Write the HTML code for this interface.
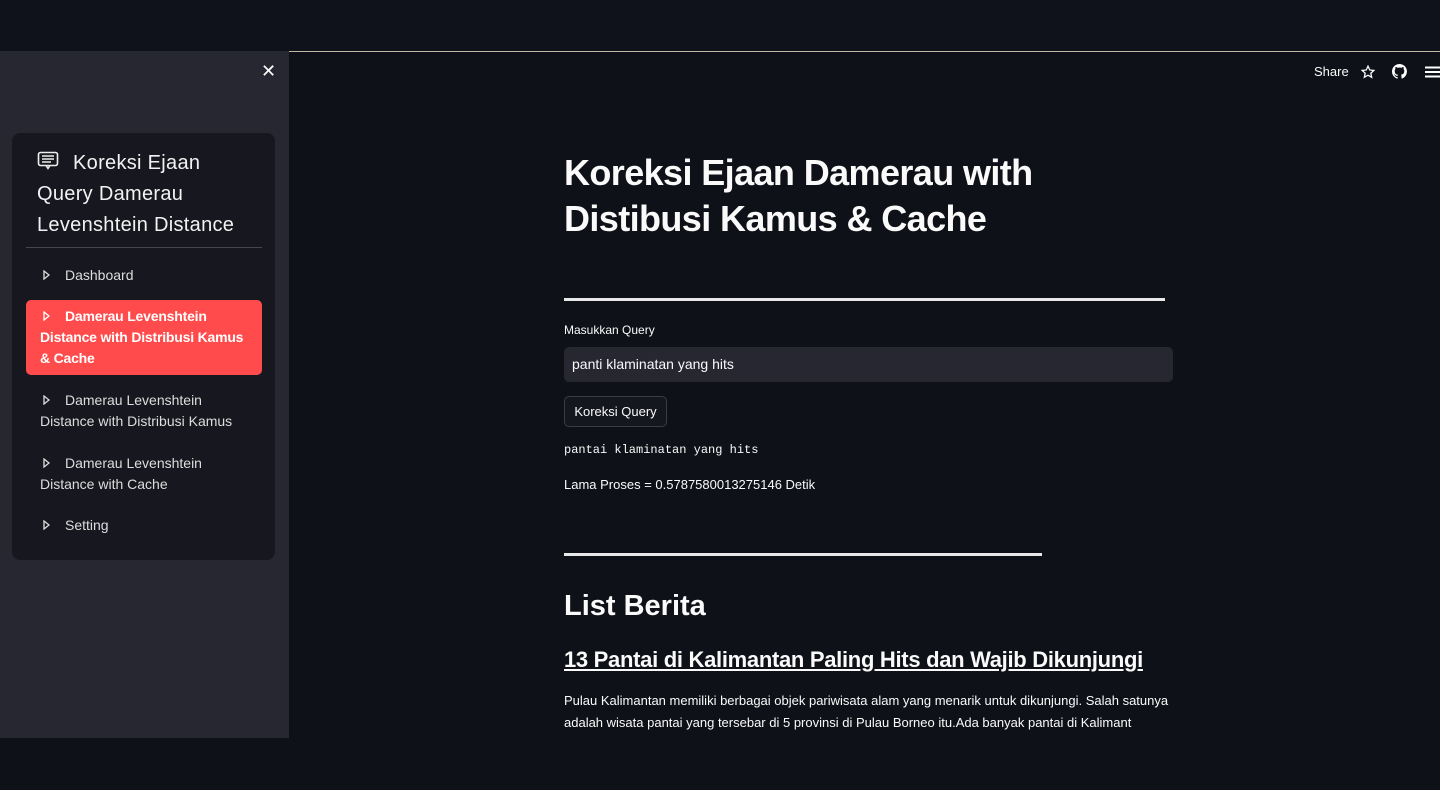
<!DOCTYPE html>
<html><head><style>
*{margin:0;padding:0;box-sizing:border-box}
body{width:1440px;height:790px;background:#0e1117;font-family:"Liberation Sans",sans-serif;color:#fafafa;position:relative;overflow:hidden}
.top{position:absolute;left:0;top:0;width:1440px;height:51px;background:#0f121a}
.line{position:absolute;left:289px;top:51px;width:1151px;height:1px;background:#bdb9a0}
.side{position:absolute;left:0;top:51px;width:289px;height:687px;background:#262730}
.close{position:absolute;left:261px;top:10px;font-size:18px;color:#fff}
.card{position:absolute;left:12px;top:82px;width:263px;height:427px;background:#17181f;border-radius:8px}
.ttl{position:absolute;left:25px;top:15px;font-size:20px;line-height:31px;color:#f2f2f2;width:205px;letter-spacing:0.3px}
.hr{position:absolute;left:14px;top:114px;width:236px;height:1px;background:#44464f}
.item{position:absolute;left:14px;width:236px;font-size:14px;line-height:21px;color:#ddd;padding-left:14px;padding-right:24px}
.item .tri{display:inline-block;width:7px;height:10px;margin-left:3px;margin-right:15px;position:relative}
.act{background:#ff4b4b;border-radius:5px;color:#fff;font-weight:bold;padding:6px 6px 6px 14px;letter-spacing:-0.2px}
h1{position:absolute;left:564px;top:150px;font-size:36px;line-height:46px;font-weight:bold;letter-spacing:-0.6px}
.rule{position:absolute;left:564px;height:3px;background:#e8e8e8}
.lbl{position:absolute;left:564px;top:323px;font-size:12px}
.inp{position:absolute;left:564px;top:347px;width:609px;height:35px;background:#262730;border-radius:5px;font-size:14px;padding:9px 8px}
.btn{position:absolute;left:564px;top:396px;width:103px;height:31px;border:1px solid #3b3d46;border-radius:5px;font-size:13px;padding:7px 0;text-align:center;white-space:nowrap;background:#15171f}
.mono{position:absolute;left:564px;top:443px;font-family:"Liberation Mono",monospace;font-size:12px}
.t{position:absolute;left:564px;font-size:13px}
h2{position:absolute;left:564px;top:590px;font-size:29px;font-weight:bold}
h3{position:absolute;left:564px;top:647px;font-size:22px;font-weight:bold;text-decoration:underline;letter-spacing:-0.3px}
p{position:absolute;left:564px;top:690px;width:620px;font-size:13px;line-height:22px}
.ic{position:absolute;top:64px}
</style></head><body>
<div class="top"></div>
<div class="line"></div>
<div class="side">
<div class="close">✕</div>
<div class="card">
<div class="ttl"><svg width="22" height="20" viewBox="0 0 22 20" style="vertical-align:-2px;margin-right:14px"><rect x="1.5" y="1.5" width="19" height="13" rx="2" fill="none" stroke="#eee" stroke-width="1.6"/><path d="M5 5h12M5 8h12M5 11h9M9 14.5l2 3 2-3" stroke="#eee" stroke-width="1.5" fill="none"/></svg>Koreksi Ejaan Query Damerau Levenshtein Distance</div>
<div class="hr"></div>
<div class="item" style="top:132px"><svg class="tri" viewBox="0 0 7 10"><path d="M1 1l5 4-5 4z" fill="none" stroke="#ddd" stroke-width="1.3"/></svg>Dashboard</div>
<div class="item act" style="top:167px"><svg class="tri" viewBox="0 0 7 10"><path d="M1 1l5 4-5 4z" fill="none" stroke="#fff" stroke-width="1.3"/></svg>Damerau Levenshtein Distance with Distribusi Kamus &amp; Cache</div>
<div class="item" style="top:257px"><svg class="tri" viewBox="0 0 7 10"><path d="M1 1l5 4-5 4z" fill="none" stroke="#ddd" stroke-width="1.3"/></svg>Damerau Levenshtein Distance with Distribusi Kamus</div>
<div class="item" style="top:320px"><svg class="tri" viewBox="0 0 7 10"><path d="M1 1l5 4-5 4z" fill="none" stroke="#ddd" stroke-width="1.3"/></svg>Damerau Levenshtein Distance with Cache</div>
<div class="item" style="top:382px"><svg class="tri" viewBox="0 0 7 10"><path d="M1 1l5 4-5 4z" fill="none" stroke="#ddd" stroke-width="1.3"/></svg>Setting</div>
</div>
</div>
<div class="ic" style="left:1314px;font-size:13px">Share</div>
<svg class="ic" style="left:1361px;top:65px" width="14" height="14" viewBox="0 0 24 24"><path d="M12 2l3 6.5 7 .8-5.2 4.8 1.5 7L12 17.5 5.7 21l1.5-7L2 9.3l7-.8z" fill="none" stroke="#fff" stroke-width="2.2"/></svg>
<svg class="ic" style="left:1392px;top:64px" width="15" height="15" viewBox="0 0 16 16"><path fill="#fff" d="M8 0a8 8 0 0 0-2.5 15.6c.4 0 .5-.2.5-.4v-1.5c-2.2.5-2.7-1-2.7-1-.4-.9-.9-1.2-.9-1.2-.7-.5.1-.5.1-.5.8.1 1.2.8 1.2.8.7 1.3 1.9.9 2.3.7.1-.5.3-.9.5-1.1-1.8-.2-3.6-.9-3.6-4 0-.9.3-1.6.8-2.1-.1-.2-.4-1 .1-2.1 0 0 .7-.2 2.2.8a7.5 7.5 0 0 1 4 0c1.5-1 2.2-.8 2.2-.8.4 1.1.2 1.9.1 2.1.5.6.8 1.3.8 2.1 0 3.1-1.9 3.8-3.6 4 .3.3.6.8.6 1.5v2.2c0 .2.1.5.6.4A8 8 0 0 0 8 0z"/></svg>
<svg class="ic" style="left:1425px;top:66px" width="15" height="12"><path d="M0 1.5h15M0 6h15M0 10.5h15" stroke="#fff" stroke-width="2"/></svg>
<h1>Koreksi Ejaan Damerau with<br>Distibusi Kamus &amp; Cache</h1>
<div class="rule" style="top:298px;width:601px"></div>
<div class="lbl">Masukkan Query</div>
<div class="inp">panti klaminatan yang hits</div>
<div class="btn">Koreksi Query</div>
<div class="mono">pantai klaminatan yang hits</div>
<div class="t" style="top:477px">Lama Proses = 0.5787580013275146 Detik</div>
<div class="rule" style="top:553px;width:478px"></div>
<h2>List Berita</h2>
<h3>13 Pantai di Kalimantan Paling Hits dan Wajib Dikunjungi</h3>
<p>Pulau Kalimantan memiliki berbagai objek pariwisata alam yang menarik untuk dikunjungi. Salah satunya adalah wisata pantai yang tersebar di 5 provinsi di Pulau Borneo itu.Ada banyak pantai di Kalimant</p>
</body></html>
